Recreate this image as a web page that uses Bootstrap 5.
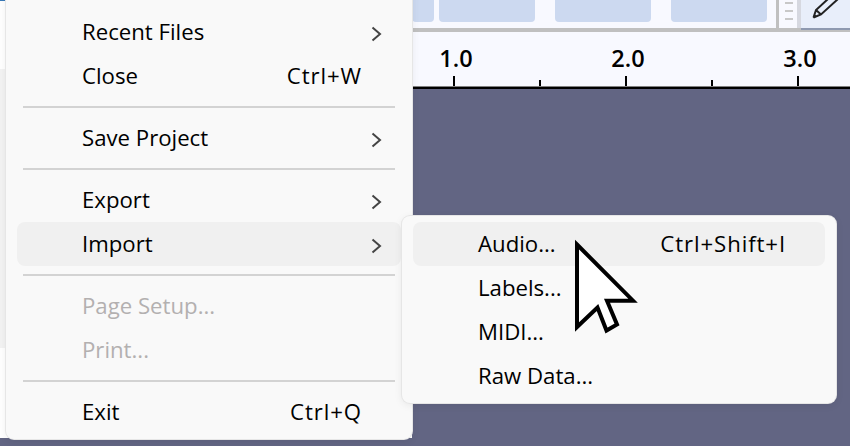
<!DOCTYPE html>
<html><head><meta charset="utf-8">
<link href="https://cdn.jsdelivr.net/npm/bootstrap@5.3.0/dist/css/bootstrap.min.css" rel="stylesheet">
<style>
html,body{margin:0;width:850px;height:446px;overflow:hidden;background:#626583}
.stage{position:relative;width:850px;height:446px;overflow:hidden;font-family:"Open Sans","Noto Sans",sans-serif}
.side{width:412px;height:438px}
.side-a{height:69px;background:#fff;border-top:1px solid #3a7ab8}
.side-b{height:279px;background:#f3f3f3}
.side-c{height:90px;background:#fff}
.main-col{width:438px;height:446px}
.tools{height:28px;background:#f8f9ff}
.chip{height:22px;width:96px;background:#ccd9f0;border-radius:0 0 4px 4px}
.chip-cut{width:22px;margin-right:-15px}
.chips{gap:20px}
.grip{width:25px;border-left:3px solid #c0c0c0;border-right:4px solid #d6d8e0;padding-top:2px}
.grip i{display:block;height:2px;width:8px;margin:0 0 6px 6px;background:#c8c8c8}
.pen{width:49px;background:#e8eefa}
.pen svg{display:block}
.rule-grey{height:4px;background:#c0c0c0}
.rule-dark{width:49px;height:2px;background:#8e99b0}
.ruler{height:54px;background:#f8f9ff;position:relative}
.ruler-line{height:3px;background:#000;border-top:1px solid #808080}
.lab{position:absolute;top:11px;font:600 23.5px/30px "Open Sans",sans-serif;color:#000;transform:translateX(-50%)}
.tick{position:absolute;bottom:0;width:2px;background:#000;height:10px}
.tick.minor{height:6px}
.pop{position:absolute;background:#f9f9f9;border-radius:8px;box-shadow:0 0 0 1px #e6e6e6,0 2px 8px rgba(0,0,0,.08)}
.pop-main{left:6px;top:-60px;width:406px;height:499px;padding:70px 11px 0}
.pop-sub{left:402px;top:216px;width:434px;height:187px;padding:6px 11px}
.it{height:44px;display:flex;align-items:center;font-size:22.2px;color:#000;border-radius:8px;white-space:nowrap}
.it .nm{padding-left:65px;flex:1}
.it .sc{letter-spacing:.9px;margin-right:-1px}
.it .ar{width:40px;flex:none;display:flex;padding-left:10px;padding-top:4px}
.hov{background:#f0f0f0}
.off{color:#b3b0b0}
.sp{height:2px;margin:8px 6px;background:#d3d3d3}
.cur{position:absolute;left:570px;top:235px}
</style></head><body>
<div class="stage d-flex">
 <div class="side d-flex flex-column"><div class="side-a"></div><div class="side-b"></div><div class="side-c"></div></div>
 <div class="main-col d-flex flex-column">
  <div class="tools d-flex">
   <div class="chips d-flex flex-grow-1"><div class="chip chip-cut"></div><div class="chip"></div><div class="chip"></div><div class="chip"></div></div>
   <div class="grip"><i></i><i></i><i></i></div>
   <div class="pen"><svg width="49" height="28" viewBox="0 0 49 28"><path d="M12.5 17.5 L15 10 L27 -1 M37 -1 L20 14.5 L12.5 17.5 M15 10 L20 14.5" fill="none" stroke="#222" stroke-width="2"/><path d="M12 18 L13.5 14 L16 16.5 Z" fill="#222"/></svg></div>
  </div>
  <div class="rule-grey"><div class="rule-dark ms-auto"></div></div>
  <div class="ruler">
   <span class="lab" style="left:44px">1.0</span><span class="lab" style="left:216px">2.0</span><span class="lab" style="left:388px">3.0</span>
   <span class="tick" style="left:41px"></span><span class="tick minor" style="left:127px"></span><span class="tick" style="left:213px"></span><span class="tick minor" style="left:299px"></span><span class="tick" style="left:385px"></span>
  </div>
  <div class="ruler-line"></div>
  <div class="flex-grow-1"></div>
 </div>
 <div class="pop pop-main">
  <div class="it"><span class="nm">Recent Files</span><span class="ar"><svg width="12" height="16" viewBox="0 0 12 16"><path d="M1.5 1.5 L9 8 L1.5 14.5" fill="none" stroke="#444" stroke-width="2"/></svg></span></div>
  <div class="it"><span class="nm">Close</span><span class="sc">Ctrl+W</span><span class="ar"></span></div>
  <div class="sp"></div>
  <div class="it"><span class="nm">Save Project</span><span class="ar"><svg width="12" height="16" viewBox="0 0 12 16"><path d="M1.5 1.5 L9 8 L1.5 14.5" fill="none" stroke="#444" stroke-width="2"/></svg></span></div>
  <div class="sp"></div>
  <div class="it"><span class="nm">Export</span><span class="ar"><svg width="12" height="16" viewBox="0 0 12 16"><path d="M1.5 1.5 L9 8 L1.5 14.5" fill="none" stroke="#444" stroke-width="2"/></svg></span></div>
  <div class="it hov"><span class="nm">Import</span><span class="ar"><svg width="12" height="16" viewBox="0 0 12 16"><path d="M1.5 1.5 L9 8 L1.5 14.5" fill="none" stroke="#444" stroke-width="2"/></svg></span></div>
  <div class="sp"></div>
  <div class="it off"><span class="nm">Page Setup...</span></div>
  <div class="it off"><span class="nm">Print...</span></div>
  <div class="sp"></div>
  <div class="it"><span class="nm">Exit</span><span class="sc">Ctrl+Q</span><span class="ar"></span></div>
 </div>
 <div class="pop pop-sub">
  <div class="it hov"><span class="nm">Audio...</span><span class="sc">Ctrl+Shift+I</span><span class="ar"></span></div>
  <div class="it"><span class="nm">Labels...</span></div>
  <div class="it"><span class="nm">MIDI...</span></div>
  <div class="it"><span class="nm">Raw Data...</span></div>
 </div>
 <svg class="cur" width="75" height="105" viewBox="570 235 75 105"><polygon points="577,244.5 633,300.7 607,300.7 617,324.5 606.5,330.5 597.5,307.5 577,327" fill="#fff" stroke="#000" stroke-width="4"/></svg>
</div>
<script src="https://cdn.jsdelivr.net/npm/bootstrap@5.3.0/dist/js/bootstrap.bundle.min.js"></script>
</body></html>
